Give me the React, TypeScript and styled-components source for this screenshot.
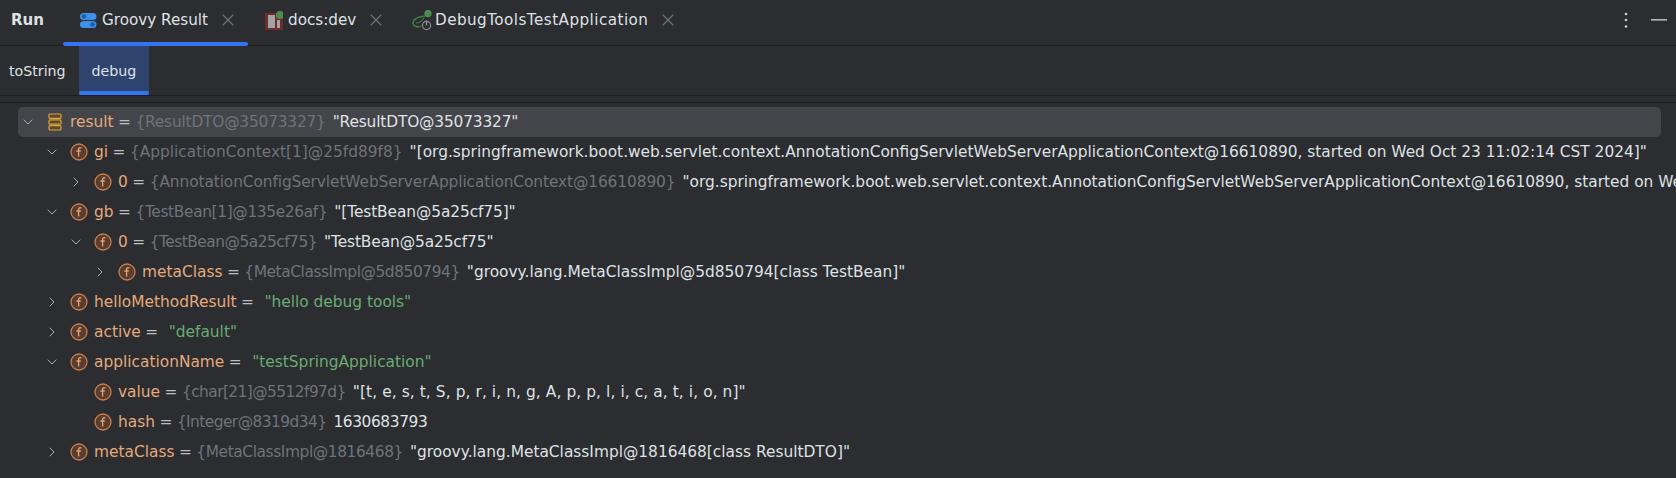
import styled, { createGlobalStyle } from "styled-components";
import { ChevronDown, ChevronRight, X } from "lucide-react";

const GlobalStyle = createGlobalStyle`
  html, body {
    margin: 0;
    height: 100%;
    background: #2b2d30;
    overflow: hidden;
  }
  body {
    font-family: "DejaVu Sans", "Liberation Sans", sans-serif;
  }
`;

const Page = styled.div`
  width: 1676px;
  height: 478px;
  overflow: hidden;
  background: #2b2d30;
  color: #dfe1e5;
`;

const TabBar = styled.div`
  height: 45px;
  display: flex;
  align-items: stretch;
  border-bottom: 1px solid #1e1f22;
`;

const RunLabel = styled.div`
  width: 63px;
  padding-left: 11px;
  box-sizing: border-box;
  display: flex;
  align-items: center;
  font-size: 15px;
  font-weight: 700;
  color: #dfe1e5;
  padding-bottom: 5px;
`;

const Tab = styled.div<{ $active?: boolean; $width: number; $spacing?: number }>`
  position: relative;
  flex: none;
  width: ${({ $width }) => $width}px;
  display: flex;
  align-items: center;
  gap: 5px;
  padding-left: 17px;
  padding-bottom: 5px;
  box-sizing: border-box;
  font-size: 15.2px;
  letter-spacing: ${({ $spacing }) => $spacing ?? 0}px;
  color: #dfe1e5;
  svg {
    flex: none;
  }
  &::after {
    content: "";
    display: ${({ $active }) => ($active ? "block" : "none")};
    position: absolute;
    left: 0;
    right: 0;
    bottom: -1px;
    height: 4px;
    border-radius: 2px;
    background: #3574f0;
  }
`;

const TabClose = styled(X)`
  margin-left: 5px;
  color: #6f737a;
`;

const TabActions = styled.div`
  margin-left: auto;
  display: flex;
  align-items: center;
  gap: 23px;
  padding-right: 9px;
  padding-bottom: 5px;
`;

const SubTabBar = styled.div`
  height: 49px;
  display: flex;
  align-items: stretch;
  border-bottom: 1px solid #1e1f22;
`;

const SubTab = styled.div<{ $active?: boolean }>`
  position: relative;
  display: flex;
  align-items: center;
  padding: 0 13px;
  font-size: 14.2px;
  color: #dfe1e5;
  background: ${({ $active }) => ($active ? "#2e436e" : "transparent")};
  &:first-child {
    padding: 0 13px 0 9px;
  }
  &::after {
    content: "";
    display: ${({ $active }) => ($active ? "block" : "none")};
    position: absolute;
    left: 0;
    right: 0;
    bottom: 0;
    height: 4px;
    border-radius: 2px;
    background: #3574f0;
  }
`;

const Divider = styled.div`
  height: 6px;
  border-bottom: 1px solid #1e1f22;
`;

const Tree = styled.div`
  padding: 4px 15px 0 18px;
`;

const Row = styled.div<{ $depth: number; $selected?: boolean }>`
  height: 30px;
  display: flex;
  align-items: center;
  white-space: nowrap;
  font-size: 15.4px;
  padding-left: ${({ $depth }) => 2 + $depth * 24}px;
  border-radius: 5px;
  background: ${({ $selected }) => ($selected ? "#43454a" : "transparent")};
`;

const Toggle = styled.span`
  width: 16px;
  height: 16px;
  flex: none;
  margin-right: 10px;
  color: #a8adb5;
  display: flex;
`;

const Name = styled.span`
  margin-left: 6px;
  color: #e5a97c;
`;

const Equals = styled.span`
  margin: 0 4.5px;
  color: #bcbec4;
`;

const TypeLabel = styled.span<{ $tight?: number }>`
  color: #6f737a;
  margin-right: 7px;
  letter-spacing: ${({ $tight }) => $tight ?? 0}px;
`;

const Value = styled.span<{ $string?: boolean; $tight?: number }>`
  color: ${({ $string }) => ($string ? "#6aab73" : "#dfe1e5")};
  margin-left: ${({ $string }) => ($string ? "6px" : "0")};
  letter-spacing: ${({ $tight }) => $tight ?? 0}px;
`;

const SpringSvg = styled.svg`
  margin-right: -2px;
`;

const GroovyIcon = () => (
  <svg width="17" height="15" viewBox="0 0 17 15">
    <rect x="0" y="0" width="16.5" height="7" rx="3.5" fill="#3d8fe8" />
    <circle cx="4" cy="3.5" r="2.3" fill="#1c5fa8" />
    <rect x="0" y="8" width="16.5" height="7" rx="3.5" fill="#3d8fe8" />
    <circle cx="12.5" cy="11.5" r="2.3" fill="#1c5fa8" />
  </svg>
);

const NpmIcon = () => (
  <svg width="18" height="19" viewBox="0 0 18 19">
    <rect x="0" y="2" width="18" height="17" fill="#6e2b30" />
    <rect x="3" y="4" width="7" height="13" fill="#a3a3a3" />
    <rect x="12" y="9" width="3" height="8" fill="#a3a3a3" />
    <circle cx="15" cy="4" r="4" fill="#4f8a4f" />
  </svg>
);

const SpringIcon = () => (
  <SpringSvg width="20" height="21" viewBox="0 0 20 21" fill="none">
    <path d="M13 6.5 C7 6 1 9 1 13 C1 16 4 17.5 8.5 16.5" stroke="#3c7a43" strokeWidth="1.7" />
    <path d="M4 13 C7 13 10 11 12 8" stroke="#3c7a43" strokeWidth="1.2" />
    <circle cx="16" cy="3.5" r="3.7" fill="#4f8a4f" />
    <circle cx="14.5" cy="15.5" r="4.1" stroke="#8c8f94" strokeWidth="1.2" />
    <path d="M14.5 10.5 V15.5" stroke="#8c8f94" strokeWidth="1.3" />
  </SpringSvg>
);

const KebabIcon = () => (
  <svg width="4" height="16" viewBox="0 0 4 16">
    <circle cx="2" cy="2" r="1.3" fill="#ced0d6" />
    <circle cx="2" cy="8" r="1.3" fill="#ced0d6" />
    <circle cx="2" cy="14.5" r="1.3" fill="#ced0d6" />
  </svg>
);

const MinimizeIcon = () => (
  <svg width="16" height="16" viewBox="0 0 16 16">
    <rect x="0" y="7" width="16" height="1.6" fill="#b4b6bb" />
  </svg>
);

const FieldIcon = () => (
  <svg width="18" height="18" viewBox="0 0 18 18" style={{ flex: "none" }}>
    <circle cx="9" cy="9" r="8" fill="#5a3d2c" stroke="#c77d4f" strokeWidth="1.3" />
    <path
      d="M11.4 5 C10 4.4 8.6 4.8 8.6 6.6 V13.4 M6.4 8 H10.8"
      fill="none"
      stroke="#e0a27a"
      strokeWidth="1.3"
    />
  </svg>
);

const WatchIcon = () => (
  <svg width="18" height="18" viewBox="0 0 18 18" style={{ flex: "none" }}>
    <rect x="3" y="1" width="12" height="4.4" rx="1" fill="#5e4a26" stroke="#d9a343" strokeWidth="1.2" />
    <rect x="3" y="6.8" width="12" height="4.4" rx="1" fill="#5e4a26" stroke="#d9a343" strokeWidth="1.2" />
    <rect x="3" y="12.6" width="12" height="4.4" rx="1" fill="#5e4a26" stroke="#d9a343" strokeWidth="1.2" />
  </svg>
);

interface NodeData {
  depth: number;
  open?: boolean;
  leaf?: boolean;
  name: string;
  type?: string;
  value: string;
  isString?: boolean;
  typeTight?: number;
  valueTight?: number;
}

const nodes: NodeData[] = [
  { depth: 1, open: true, name: "gi", type: "{ApplicationContext[1]@25fd89f8}", value: '"[org.springframework.boot.web.servlet.context.AnnotationConfigServletWebServerApplicationContext@16610890, started on Wed Oct 23 11:02:14 CST 2024]"' },
  { depth: 2, name: "0", type: "{AnnotationConfigServletWebServerApplicationContext@16610890}", value: '"org.springframework.boot.web.servlet.context.AnnotationConfigServletWebServerApplicationContext@16610890, started on Wed Oct 23 11:02:14 CST 2024"', typeTight: -0.1 },
  { depth: 1, open: true, name: "gb", type: "{TestBean[1]@135e26af}", value: '"[TestBean@5a25cf75]"', typeTight: -0.35, valueTight: -0.1 },
  { depth: 2, open: true, name: "0", type: "{TestBean@5a25cf75}", value: '"TestBean@5a25cf75"', typeTight: -0.5, valueTight: -0.1 },
  { depth: 3, name: "metaClass", type: "{MetaClassImpl@5d850794}", value: '"groovy.lang.MetaClassImpl@5d850794[class TestBean]"', typeTight: -0.42 },
  { depth: 1, name: "helloMethodResult", value: '"hello debug tools"', isString: true },
  { depth: 1, name: "active", value: '"default"', isString: true },
  { depth: 1, open: true, name: "applicationName", value: '"testSpringApplication"', isString: true },
  { depth: 2, leaf: true, name: "value", type: "{char[21]@5512f97d}", value: '"[t, e, s, t, S, p, r, i, n, g, A, p, p, l, i, c, a, t, i, o, n]"', typeTight: -0.56, valueTight: 0.09 },
  { depth: 2, leaf: true, name: "hash", type: "{Integer@8319d34}", value: "1630683793", typeTight: -0.55, valueTight: -0.4 },
  { depth: 1, name: "metaClass", type: "{MetaClassImpl@1816468}", value: '"groovy.lang.MetaClassImpl@1816468[class ResultDTO]"', typeTight: -0.4 },
];

const TreeNode = ({ depth, open, leaf, name, type, value, isString, typeTight, valueTight }: NodeData) => (
  <Row $depth={depth}>
    <Toggle>
      {leaf ? null : open ? <ChevronDown size={16} strokeWidth={1.5} /> : <ChevronRight size={16} strokeWidth={1.5} />}
    </Toggle>
    <FieldIcon />
    <Name>{name}</Name>
    <Equals>=</Equals>
    {type && <TypeLabel $tight={typeTight}>{type}</TypeLabel>}
    <Value $string={isString} $tight={valueTight}>{value}</Value>
  </Row>
);

const App = () => {
  return (
    <Page>
      <GlobalStyle />
      <TabBar>
        <RunLabel>Run</RunLabel>
        <Tab $active $width={185}>
          <GroovyIcon />
          Groovy Result
          <TabClose size={20} strokeWidth={1.3} />
        </Tab>
        <Tab $width={147}>
          <NpmIcon />
          docs:dev
          <TabClose size={20} strokeWidth={1.3} />
        </Tab>
        <Tab $width={290} $spacing={0.45}>
          <SpringIcon />
          DebugToolsTestApplication
          <TabClose size={20} strokeWidth={1.3} />
        </Tab>
        <TabActions>
          <KebabIcon />
          <MinimizeIcon />
        </TabActions>
      </TabBar>
      <SubTabBar>
        <SubTab>toString</SubTab>
        <SubTab $active>debug</SubTab>
      </SubTabBar>
      <Divider />
      <Tree>
        <Row $depth={0} $selected>
          <Toggle>
            <ChevronDown size={16} strokeWidth={1.5} />
          </Toggle>
          <WatchIcon />
          <Name>result</Name>
          <Equals>=</Equals>
          <TypeLabel $tight={-0.2}>{"{ResultDTO@35073327}"}</TypeLabel>
          <Value $tight={-0.16}>"ResultDTO@35073327"</Value>
        </Row>
        {nodes.map((node, i) => (
          <TreeNode key={i} {...node} />
        ))}
      </Tree>
    </Page>
  );
};

export default App;
